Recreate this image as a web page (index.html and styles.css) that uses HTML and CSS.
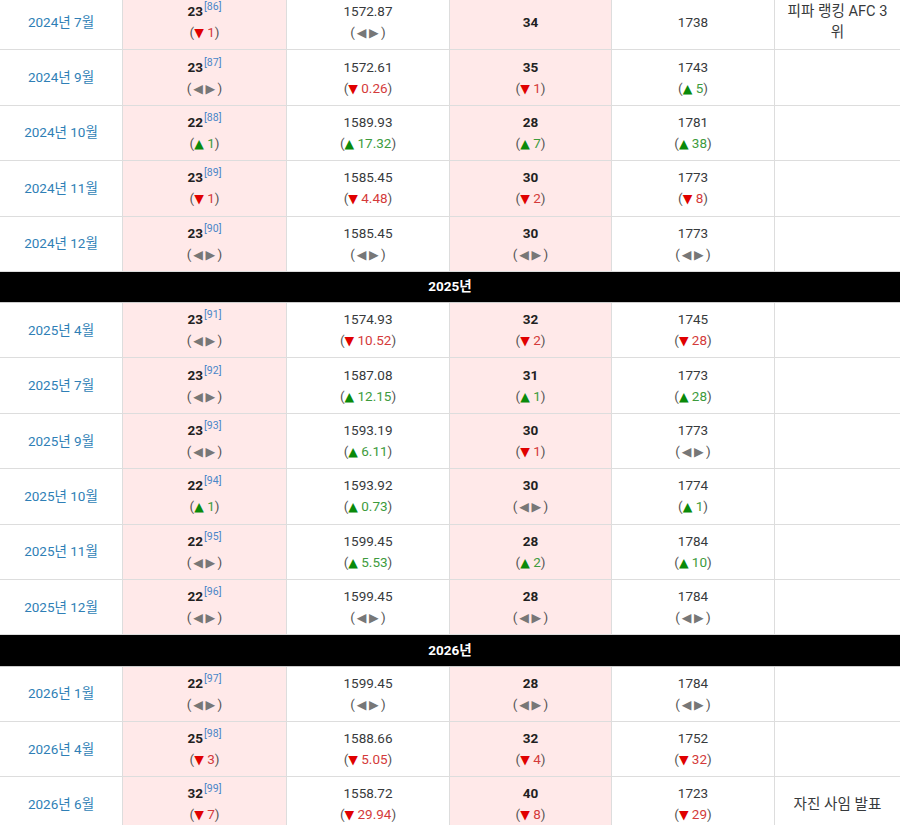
FILE: index.html
```html
<!DOCTYPE html>
<html lang="ko">
<head>
<meta charset="utf-8">
<title>랭킹</title>
<link rel="stylesheet" href="styles.css">
</head>
<body>
<table class="rank">
<colgroup>
<col class="c1"><col class="c2"><col class="c3"><col class="c4"><col class="c5"><col class="c6">
</colgroup>
<tbody>
<tr>
<td><a class="date">2024년 7월</a></td>
<td class="pink"><b>23</b><sup>[86]</sup><br><span class="ch">(<span class="dn">▼</span> <span class="rd">1</span>)</span></td>
<td>1572.87<br><span class="ch">(<span class="eq">◀▶</span>)</span></td>
<td class="pink"><b>34</b></td>
<td>1738</td>
<td class="note">피파 랭킹 AFC 3위</td>
</tr>
<tr>
<td><a class="date">2024년 9월</a></td>
<td class="pink"><b>23</b><sup>[87]</sup><br><span class="ch">(<span class="eq">◀▶</span>)</span></td>
<td>1572.61<br><span class="ch">(<span class="dn">▼</span> <span class="rd">0.26</span>)</span></td>
<td class="pink"><b>35</b><br><span class="ch">(<span class="dn">▼</span> <span class="rd">1</span>)</span></td>
<td>1743<br><span class="ch">(<span class="up">▲</span> <span class="gr">5</span>)</span></td>
<td class="note"></td>
</tr>
<tr>
<td><a class="date">2024년 10월</a></td>
<td class="pink"><b>22</b><sup>[88]</sup><br><span class="ch">(<span class="up">▲</span> <span class="gr">1</span>)</span></td>
<td>1589.93<br><span class="ch">(<span class="up">▲</span> <span class="gr">17.32</span>)</span></td>
<td class="pink"><b>28</b><br><span class="ch">(<span class="up">▲</span> <span class="gr">7</span>)</span></td>
<td>1781<br><span class="ch">(<span class="up">▲</span> <span class="gr">38</span>)</span></td>
<td class="note"></td>
</tr>
<tr>
<td><a class="date">2024년 11월</a></td>
<td class="pink"><b>23</b><sup>[89]</sup><br><span class="ch">(<span class="dn">▼</span> <span class="rd">1</span>)</span></td>
<td>1585.45<br><span class="ch">(<span class="dn">▼</span> <span class="rd">4.48</span>)</span></td>
<td class="pink"><b>30</b><br><span class="ch">(<span class="dn">▼</span> <span class="rd">2</span>)</span></td>
<td>1773<br><span class="ch">(<span class="dn">▼</span> <span class="rd">8</span>)</span></td>
<td class="note"></td>
</tr>
<tr>
<td><a class="date">2024년 12월</a></td>
<td class="pink"><b>23</b><sup>[90]</sup><br><span class="ch">(<span class="eq">◀▶</span>)</span></td>
<td>1585.45<br><span class="ch">(<span class="eq">◀▶</span>)</span></td>
<td class="pink"><b>30</b><br><span class="ch">(<span class="eq">◀▶</span>)</span></td>
<td>1773<br><span class="ch">(<span class="eq">◀▶</span>)</span></td>
<td class="note"></td>
</tr>
<tr class="year"><td colspan="6">2025년</td></tr>
<tr>
<td><a class="date">2025년 4월</a></td>
<td class="pink"><b>23</b><sup>[91]</sup><br><span class="ch">(<span class="eq">◀▶</span>)</span></td>
<td>1574.93<br><span class="ch">(<span class="dn">▼</span> <span class="rd">10.52</span>)</span></td>
<td class="pink"><b>32</b><br><span class="ch">(<span class="dn">▼</span> <span class="rd">2</span>)</span></td>
<td>1745<br><span class="ch">(<span class="dn">▼</span> <span class="rd">28</span>)</span></td>
<td class="note"></td>
</tr>
<tr>
<td><a class="date">2025년 7월</a></td>
<td class="pink"><b>23</b><sup>[92]</sup><br><span class="ch">(<span class="eq">◀▶</span>)</span></td>
<td>1587.08<br><span class="ch">(<span class="up">▲</span> <span class="gr">12.15</span>)</span></td>
<td class="pink"><b>31</b><br><span class="ch">(<span class="up">▲</span> <span class="gr">1</span>)</span></td>
<td>1773<br><span class="ch">(<span class="up">▲</span> <span class="gr">28</span>)</span></td>
<td class="note"></td>
</tr>
<tr>
<td><a class="date">2025년 9월</a></td>
<td class="pink"><b>23</b><sup>[93]</sup><br><span class="ch">(<span class="eq">◀▶</span>)</span></td>
<td>1593.19<br><span class="ch">(<span class="up">▲</span> <span class="gr">6.11</span>)</span></td>
<td class="pink"><b>30</b><br><span class="ch">(<span class="dn">▼</span> <span class="rd">1</span>)</span></td>
<td>1773<br><span class="ch">(<span class="eq">◀▶</span>)</span></td>
<td class="note"></td>
</tr>
<tr>
<td><a class="date">2025년 10월</a></td>
<td class="pink"><b>22</b><sup>[94]</sup><br><span class="ch">(<span class="up">▲</span> <span class="gr">1</span>)</span></td>
<td>1593.92<br><span class="ch">(<span class="up">▲</span> <span class="gr">0.73</span>)</span></td>
<td class="pink"><b>30</b><br><span class="ch">(<span class="eq">◀▶</span>)</span></td>
<td>1774<br><span class="ch">(<span class="up">▲</span> <span class="gr">1</span>)</span></td>
<td class="note"></td>
</tr>
<tr>
<td><a class="date">2025년 11월</a></td>
<td class="pink"><b>22</b><sup>[95]</sup><br><span class="ch">(<span class="eq">◀▶</span>)</span></td>
<td>1599.45<br><span class="ch">(<span class="up">▲</span> <span class="gr">5.53</span>)</span></td>
<td class="pink"><b>28</b><br><span class="ch">(<span class="up">▲</span> <span class="gr">2</span>)</span></td>
<td>1784<br><span class="ch">(<span class="up">▲</span> <span class="gr">10</span>)</span></td>
<td class="note"></td>
</tr>
<tr>
<td><a class="date">2025년 12월</a></td>
<td class="pink"><b>22</b><sup>[96]</sup><br><span class="ch">(<span class="eq">◀▶</span>)</span></td>
<td>1599.45<br><span class="ch">(<span class="eq">◀▶</span>)</span></td>
<td class="pink"><b>28</b><br><span class="ch">(<span class="eq">◀▶</span>)</span></td>
<td>1784<br><span class="ch">(<span class="eq">◀▶</span>)</span></td>
<td class="note"></td>
</tr>
<tr class="year"><td colspan="6">2026년</td></tr>
<tr>
<td><a class="date">2026년 1월</a></td>
<td class="pink"><b>22</b><sup>[97]</sup><br><span class="ch">(<span class="eq">◀▶</span>)</span></td>
<td>1599.45<br><span class="ch">(<span class="eq">◀▶</span>)</span></td>
<td class="pink"><b>28</b><br><span class="ch">(<span class="eq">◀▶</span>)</span></td>
<td>1784<br><span class="ch">(<span class="eq">◀▶</span>)</span></td>
<td class="note"></td>
</tr>
<tr>
<td><a class="date">2026년 4월</a></td>
<td class="pink"><b>25</b><sup>[98]</sup><br><span class="ch">(<span class="dn">▼</span> <span class="rd">3</span>)</span></td>
<td>1588.66<br><span class="ch">(<span class="dn">▼</span> <span class="rd">5.05</span>)</span></td>
<td class="pink"><b>32</b><br><span class="ch">(<span class="dn">▼</span> <span class="rd">4</span>)</span></td>
<td>1752<br><span class="ch">(<span class="dn">▼</span> <span class="rd">32</span>)</span></td>
<td class="note"></td>
</tr>
<tr>
<td><a class="date">2026년 6월</a></td>
<td class="pink"><b>32</b><sup>[99]</sup><br><span class="ch">(<span class="dn">▼</span> <span class="rd">7</span>)</span></td>
<td>1558.72<br><span class="ch">(<span class="dn">▼</span> <span class="rd">29.94</span>)</span></td>
<td class="pink"><b>40</b><br><span class="ch">(<span class="dn">▼</span> <span class="rd">8</span>)</span></td>
<td>1723<br><span class="ch">(<span class="dn">▼</span> <span class="rd">29</span>)</span></td>
<td class="note">자진 사임 발표</td>
</tr>
</tbody>
</table>
</body>
</html>
```
FILE: styles.css
```css
html, body {
  margin: 0;
  padding: 0;
  background: #fff;
}
body {
  font-family: Roboto, "Noto Sans CJK KR", sans-serif;
  font-size: 13.5px;
  color: #373a3c;
  overflow: hidden;
}
.rank {
  width: 901px;
  margin: -6px 0 0 -1px;
  border-collapse: collapse;
  table-layout: fixed;
}
.c1 { width: 123px; }
.c2 { width: 164px; }
.c3 { width: 163px; }
.c4 { width: 162px; }
.c5 { width: 163px; }
.c6 { width: 126px; }
.rank td {
  border: 1px solid #dddddd;
  padding: 6.2px 10px;
  height: 42px;
  box-sizing: content-box;
  line-height: 21px;
  text-align: center;
  vertical-align: middle;
  background: #fff;
  overflow: hidden;
}
.rank td.pink {
  background: #ffe9e9;
}
.rank td.note {
  font-size: 14.6px;
  padding-left: 12px;
  padding-right: 12px;
}
.rank b {
  font-weight: 700;
  color: #212121;
}
.date {
  color: #2f7fb6;
  text-decoration: none;
}
sup {
  font-size: 10.5px;
  line-height: 0;
  color: #4a86c8;
  vertical-align: 0;
  position: relative;
  top: -6px;
  margin-left: 1px;
}
.ch {
  color: #555;
}
.dn, .up, .eq {
  font-family: "DejaVu Sans", sans-serif;
  font-size: 12.5px;
  line-height: 0;
}
.dn { color: #e00000; }
.up { color: #0a8a0a; }
.eq {
  color: #777;
  letter-spacing: 2.5px;
  padding-left: 2px;
}
.rd { color: #d43a3a; }
.gr { color: #3d9b3d; }
.rank tr.year td {
  background: #000;
  color: #fff;
  font-weight: 700;
  height: 21px;
  padding: 4.6px 5px;
  border-color: #000;
  border-top-color: #ccc;
  border-bottom-color: #ccc;
}
```
